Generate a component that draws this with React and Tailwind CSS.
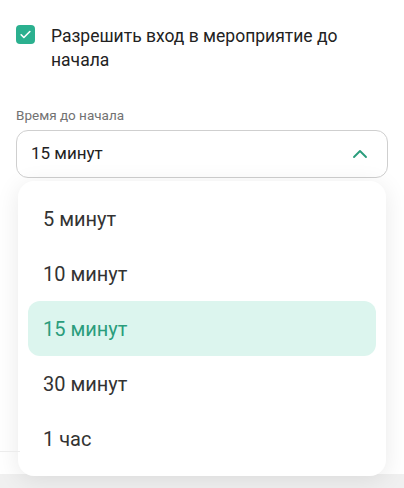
import { useState } from "react";

const options = ["5 минут", "10 минут", "15 минут", "30 минут", "1 час"];

function Checkbox() {
  return (
    <span className="mt-[1px] flex h-[19px] w-[19px] shrink-0 items-center justify-center rounded-[4px] bg-[#2bb08f]">
      <svg width="13" height="13" viewBox="0 0 24 24" fill="none" stroke="white" strokeWidth="3" strokeLinecap="round" strokeLinejoin="round">
        <path d="M4 12.5l5 5L20 6.5" />
      </svg>
    </span>
  );
}

export default function App() {
  const [value, setValue] = useState("15 минут");

  return (
    <div className="min-h-[488px] bg-[#f0f0f0] font-['Roboto',sans-serif]">
      <div className="relative h-[474px] bg-white px-4 pt-[24px]">
        <label className="flex gap-[16px]">
          <Checkbox />
          <span className="text-[17.5px] leading-[24px] text-[#222]">
            Разрешить вход в мероприятие до начала
          </span>
        </label>

        <div className="mt-[34px] text-[13.5px] leading-[18px] text-[#727272]">Время до начала</div>

        <div className="relative mt-[6px]">
          <button className="flex h-[48px] w-full items-center justify-between rounded-[12px] border border-[#cfcfcf] bg-white pl-[14px] pr-[18px] text-left text-[17px] text-[#222]">
            {value}
            <svg width="18" height="18" viewBox="0 0 24 24" fill="none" stroke="#2a9d7c" strokeWidth="2.5" strokeLinecap="round" strokeLinejoin="round">
              <path d="M4 16l8-8 8 8" />
            </svg>
          </button>

          <ul className="absolute left-[2px] right-[2px] top-[51px] rounded-[16px] bg-white p-[10px] shadow-[0_4px_24px_rgba(0,0,0,0.09)]">
            {options.map((opt) => (
              <li
                key={opt}
                onClick={() => setValue(opt)}
                className={
                  opt === value
                    ? "flex h-[55px] items-center rounded-[12px] bg-[#dcf5ee] px-[15px] text-[20px] text-[#2a9d7c]"
                    : "flex h-[55px] items-center rounded-[12px] px-[15px] text-[20px] text-[#333]"
                }
              >
                {opt}
              </li>
            ))}
          </ul>
        </div>

        <div className="absolute left-0 top-[451px] h-px w-[20px] bg-[#ececec]" />
      </div>
    </div>
  );
}
